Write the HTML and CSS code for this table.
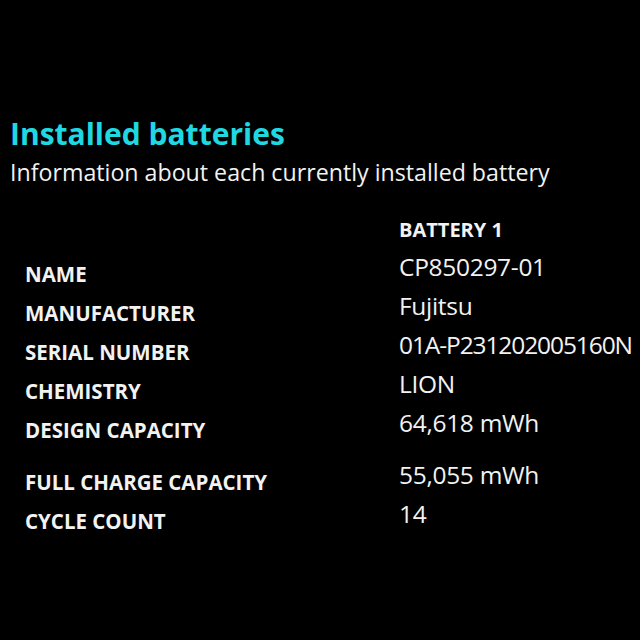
FILE: index.html
```html
<!DOCTYPE html>
<html lang="en">
<head>
<meta charset="utf-8">
<title>Battery report</title>
<link rel="stylesheet" href="styles.css">
</head>
<body>
<main class="report">
  <h1 class="title">Installed batteries</h1>
  <p class="subtitle">Information about each currently installed battery</p>
  <div class="specs">
    <div class="row head"><span class="label"></span><span class="value">BATTERY 1</span></div>
    <div class="row"><span class="label">NAME</span><span class="value">CP850297-01</span></div>
    <div class="row"><span class="label">MANUFACTURER</span><span class="value">Fujitsu</span></div>
    <div class="row"><span class="label">SERIAL NUMBER</span><span class="value value--tight">01A-P231202005160N</span></div>
    <div class="row"><span class="label">CHEMISTRY</span><span class="value">LION</span></div>
    <div class="row"><span class="label">DESIGN CAPACITY</span><span class="value">64,618 mWh</span></div>
    <div class="row spaced"><span class="label">FULL CHARGE CAPACITY</span><span class="value">55,055 mWh</span></div>
    <div class="row"><span class="label">CYCLE COUNT</span><span class="value">14</span></div>
  </div>
</main>
</body>
</html>
```
FILE: styles.css
```css
html, body {
  margin: 0;
  padding: 0;
  background: #000;
}
body {
  width: 640px;
  height: 640px;
  overflow: hidden;
  font-family: "Open Sans", "Noto Sans", sans-serif;
  color: #f2f2f2;
}
.report {
  padding: 119px 0 0 10px;
}
.title {
  margin: 0;
  font-size: 30px;
  line-height: 30px;
  font-weight: 700;
  color: #1fd8e2;
  white-space: nowrap;
}
.subtitle {
  margin: 12px 0 0;
  font-size: 23.2px;
  line-height: 23px;
  font-weight: 400;
  white-space: nowrap;
}
.specs {
  margin: 36px 0 0 15px;
  display: flex;
  flex-direction: column;
}
.row {
  display: grid;
  grid-template-columns: 374px auto;
  align-items: end;
  height: 39px;
  white-space: nowrap;
}
.row.head {
  height: 20px;
}
.row.head + .row {
  height: 44px;
}
.row.spaced {
  height: 52px;
}
.label {
  font-size: 20.5px;
  line-height: 20px;
  font-weight: 700;
}
.value {
  font-size: 24.5px;
  line-height: 24px;
  letter-spacing: -0.3px;
  padding-bottom: 5px;
}
.value--tight {
  letter-spacing: -1.1px;
}
.head .value {
  font-size: 20px;
  line-height: 20px;
  font-weight: 700;
  letter-spacing: 0;
  padding-bottom: 0;
}
```
